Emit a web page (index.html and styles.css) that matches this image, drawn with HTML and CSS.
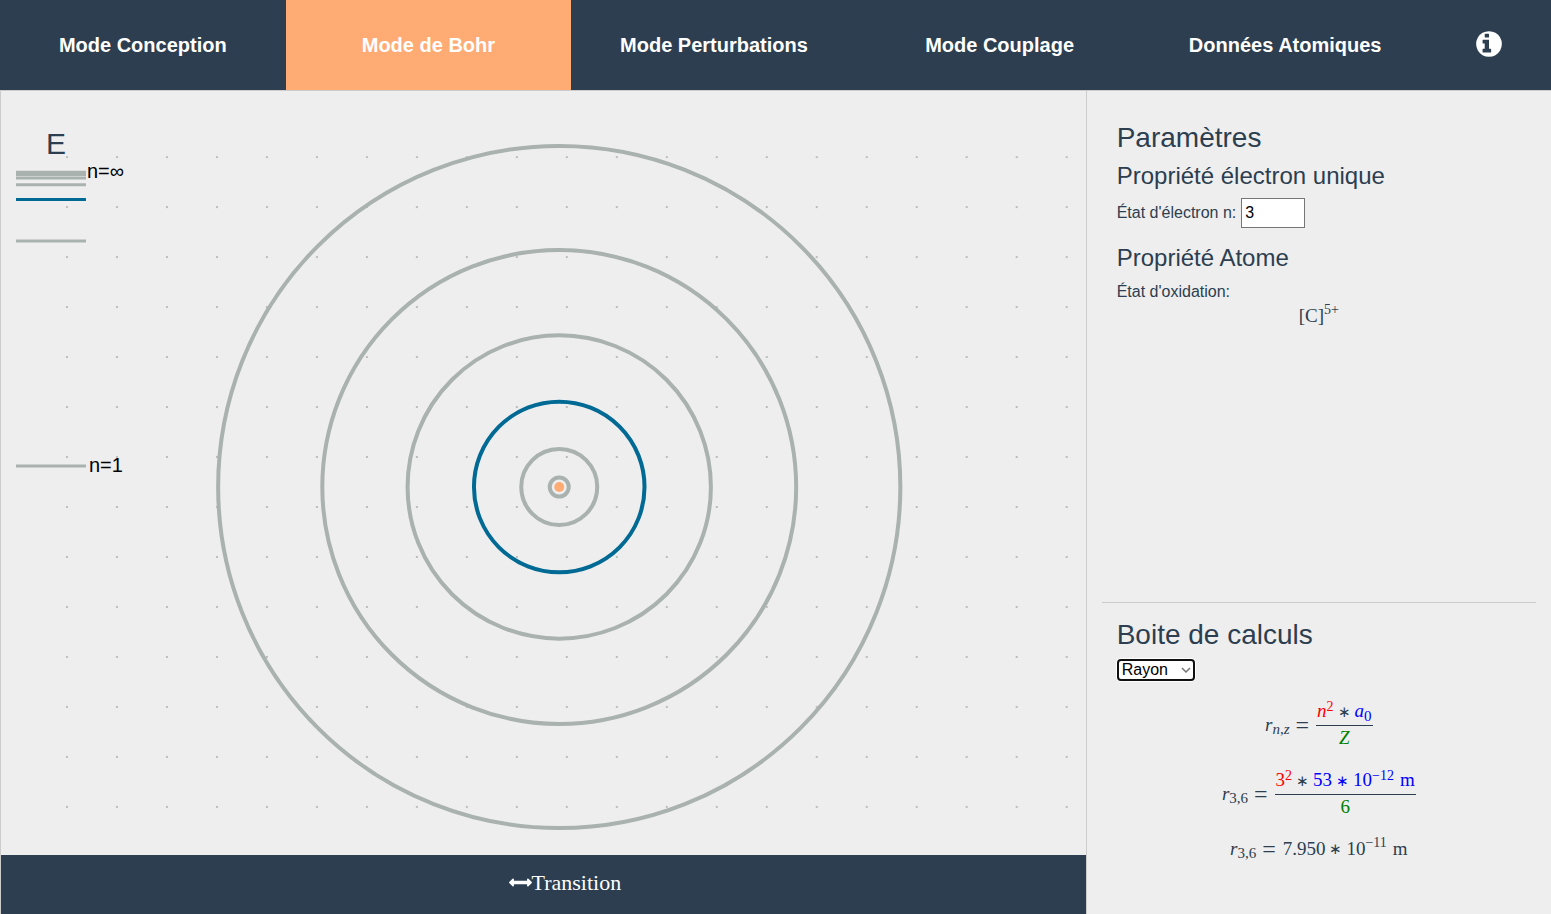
FILE: index.html
```html
<!DOCTYPE html>
<html lang="fr">
<head>
<meta charset="utf-8">
<title>Mode de Bohr</title>
<link rel="stylesheet" href="styles.css">
</head>
<body>
<nav class="nav">
  <a class="nav-item" href="#conception">Mode Conception</a>
  <a class="nav-item active" href="#bohr">Mode de Bohr</a>
  <a class="nav-item" href="#perturbations">Mode Perturbations</a>
  <a class="nav-item" href="#couplage">Mode Couplage</a>
  <a class="nav-item" href="#donnees">Données Atomiques</a>
  <a class="nav-info" href="#info" aria-label="Informations">
    <svg class="info-icon" viewBox="0 0 1792 1792" aria-hidden="true"><path d="M1024 1376v-160q0-14-9-23t-23-9h-96v-512q0-14-9-23t-23-9h-320q-14 0-23 9t-9 23v160q0 14 9 23t23 9h96v320h-96q-14 0-23 9t-9 23v160q0 14 9 23t23 9h448q14 0 23-9t9-23zM896 480v-160q0-14-9-23t-23-9h-192q-14 0-23 9t-9 23v160q0 14 9 23t23 9h192q14 0 23-9t9-23zM1664 896q0 209-103 385.5t-279.5 279.5-385.5 103-385.5-103-279.5-279.5-103-385.5 103-385.5 279.5-279.5 385.5-103 385.5 103 279.5 279.5 103 385.5z"/></svg>
  </a>
</nav>
<main class="layout">
  <section class="stage">
    <svg class="diagram" viewBox="0 0 1085 764" role="img" aria-label="Orbites de Bohr">
      <defs>
        <pattern id="dots" x="65" y="65" width="50" height="50" patternUnits="userSpaceOnUse">
          <rect class="dot" width="2" height="2"/>
        </pattern>
      </defs>
      <rect x="65" y="65" width="1005" height="655" fill="url(#dots)"/>
      <g class="orbits">
        <circle cx="558.4" cy="396" r="9.5"/>
        <circle cx="558.4" cy="396" r="38"/>
        <circle class="current" cx="558.4" cy="396" r="85.3"/>
        <circle cx="558.4" cy="396" r="151.7"/>
        <circle cx="558.4" cy="396" r="237"/>
        <circle cx="558.4" cy="396" r="341.2"/>
      </g>
      <circle class="nucleus" cx="558.4" cy="396" r="5"/>
      <g class="levels">
        <path d="M15 375h70M15 150h70M15 93.7h70M15 87h70M15 83.3h70M15 81.1h70"/>
        <path class="current" d="M15 108.3h70"/>
      </g>
      <text class="axis" x="45" y="63">E</text>
      <text class="label" x="86" y="87">n=∞</text>
      <text class="label" x="88" y="381">n=1</text>
    </svg>
    <button class="transition" type="button">
      <svg class="arrow-icon" viewBox="0 0 1792 1792" aria-hidden="true"><path d="M1792 896q0 26-19 45l-256 256q-19 19-45 19t-45-19-19-45v-128h-1024v128q0 26-19 45t-45 19-45-19l-256-256q-19-19-19-45t19-45l256-256q19-19 45-19t45 19 19 45v128h1024v-128q0-26 19-45t45-19 45 19l256 256q19 19 19 45z"/></svg><span>Transition</span>
    </button>
  </section>
  <aside class="side">
    <section class="params">
      <h1 class="title">Paramètres</h1>
      <h2 class="subtitle">Propriété électron unique</h2>
      <div class="field">
        <label for="state">État d'électron n:</label>
        <input class="state" id="state" type="text" inputmode="numeric" value="3">
      </div>
      <h2 class="subtitle">Propriété Atome</h2>
      <p class="text">État d'oxidation:</p>
      <div class="math ion"><span>[C]</span><sup>5+</sup></div>
    </section>
    <section class="calc">
      <h1 class="title"><label for="quantity">Boite de calculs</label></h1>
      <div class="picker">
        <select class="quantity" id="quantity"><option>Rayon</option><option>Énergie</option></select>
        <svg class="chevron" viewBox="0 0 10 6" aria-hidden="true"><path d="M1 1l4 4 4-4"/></svg>
      </div>
      <div class="formulas">
        <div class="math">
          <i>r</i><sub><i>n</i>,<i>z</i></sub><span class="eq">=</span>
          <span class="frac">
            <span class="num"><span class="red"><i>n</i><sup>2</sup></span><span class="op">∗</span><span class="blue"><i>a</i><sub>0</sub></span></span>
            <span class="den"><i>Z</i></span>
          </span>
        </div>
        <div class="math">
          <i>r</i><sub>3,6</sub><span class="eq">=</span>
          <span class="frac">
            <span class="num"><span class="red">3<sup>2</sup></span><span class="op">∗</span><span class="blue">53<span class="op">∗</span>10<sup>−12</sup><span class="unit">m</span></span></span>
            <span class="den">6</span>
          </span>
        </div>
        <div class="math">
          <i>r</i><sub>3,6</sub><span class="eq">=</span>7.950<span class="op">∗</span>10<sup>−11</sup><span class="unit">m</span>
        </div>
      </div>
    </section>
  </aside>
</main>
</body>
</html>
```
FILE: styles.css
```css
* { box-sizing: border-box; }

body {
  margin: 0;
  min-height: 100vh;
  display: flex;
  flex-direction: column;
  background: #eee;
  color: #2c3e50;
  font: 16px/24px "Liberation Sans", Arial, sans-serif;
}

.nav {
  display: flex;
  height: 90px;
  background: #2c3e50;
}
.nav-item, .nav-info {
  display: flex;
  align-items: center;
  justify-content: center;
  color: #fff;
  font-size: 20px;
  font-weight: bold;
  text-decoration: none;
}
.nav-item { flex: 1; }
.nav-item.active { background: #ffab73; }
.nav-info { flex: 0 0 123px; padding-bottom: 2px; }
.info-icon { width: 30px; height: 30px; fill: #fff; }

.layout {
  flex: 1;
  display: grid;
  grid-template-columns: 70% 30%;
  border-top: 1px solid #ccc;
}
.stage {
  display: flex;
  flex-direction: column;
  border-left: 1px solid #ccc;
  min-width: 0;
}
.diagram {
  flex: 1;
  width: 100%;
  min-height: 0;
  display: block;
}
.dot { fill: #bdbdbd; }
.orbits, .levels { fill: none; stroke: #a9b2ae; }
.orbits { stroke-width: 4; }
.levels { stroke-width: 3; }
.current { stroke: #006994; }
.nucleus { fill: #ffab73; }
.axis { font-size: 30px; fill: #2c3e50; }
.label { font-size: 20px; fill: #000; }

.transition {
  display: flex;
  align-items: center;
  justify-content: center;
  height: 59px;
  padding: 0 0 4px 43px;
  border: 0;
  background: #2c3e50;
  color: #fff;
  font: 22px/26px "Liberation Serif", "Times New Roman", serif;
}
.arrow-icon { width: 23px; height: 23px; fill: #fff; }

.side {
  display: flex;
  flex-direction: column;
  border-left: 1px solid #ccc;
  padding: 0 15px;
}
.params { flex: 0 0 511px; padding: 30px 15px 0; }
.calc { border-top: 1px solid #ccc; padding: 15px 15px 0; }
.title { margin: 0 0 7px; font-size: 28px; line-height: 34px; font-weight: normal; }
.subtitle { margin: 0 0 8px; font-size: 24px; line-height: 28px; font-weight: normal; }
.field { display: flex; align-items: center; gap: 5px; margin-bottom: 16px; }
.text { margin: 0; }
.state {
  width: 64px;
  height: 30px;
  padding: 1px 3px;
  border: 1px solid #767676;
  background: #fff;
  color: #000;
  font: inherit;
}
.picker {
  position: relative;
  width: 78px;
}
.quantity {
  display: block;
  width: 100%;
  height: 22px;
  padding: 0 3px;
  appearance: none;
  border: 2px solid #101010;
  border-radius: 4px;
  box-shadow: 0 0 0 1px #fff;
  background: #fff;
  color: #000;
  font: 16px/18px "Liberation Sans", Arial, sans-serif;
}
.chevron {
  position: absolute;
  top: 8px;
  right: 4px;
  width: 10px;
  height: 6px;
  fill: none;
  stroke: #767676;
  stroke-width: 1.5;
  pointer-events: none;
}

.formulas {
  display: flex;
  flex-direction: column;
  align-items: center;
  gap: 18px;
  margin-top: 18px;
}
.math {
  display: flex;
  align-items: center;
  justify-content: center;
  font: 19px/24px "Liberation Serif", "Times New Roman", serif;
}
.math sup, .math sub { font-size: 14px; line-height: 14px; position: relative; vertical-align: baseline; }
.math sup { top: -6px; }
.math sub { top: 4px; font-size: 15px; }
.eq { margin: 0 7px 0 6px; font-size: 24px; }
.op { margin: 0 4px; font-size: 15px; }
.unit { margin-left: 6px; }
.frac { display: flex; flex-direction: column; align-items: center; }
.num { padding: 0 1px 1px; border-bottom: 1px solid #2c3e50; }
.red { color: #f00; }
.blue { color: #00f; }
.den { color: #008000; }
```
